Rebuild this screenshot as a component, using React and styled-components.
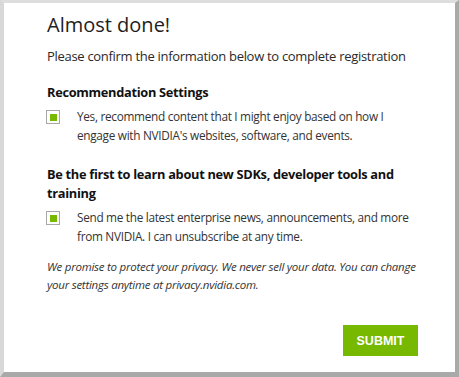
import React from 'react';
import styled, { createGlobalStyle } from 'styled-components';

const Global = createGlobalStyle`
  html, body { margin: 0; padding: 0; background: #fff; }
  * { box-sizing: border-box; }
`;

export default function App() {
  return (
    <>
      <Global />
      <Frame>
        <Title>Almost done!</Title>
        <Intro>Please confirm the information below to complete registration</Intro>

        <Section>
          <SectionTitle>Recommendation Settings</SectionTitle>
          <Option>
            <Check checked />
            <OptionText>
              Yes, recommend content that I might enjoy based on how I engage with NVIDIA's websites, software, and events.
            </OptionText>
          </Option>
        </Section>

        <Section second>
          <SectionTitle>Be the first to learn about new SDKs, developer tools and training</SectionTitle>
          <Option>
            <Check checked />
            <OptionText>
              Send me the latest enterprise news, announcements, and more from NVIDIA. I can unsubscribe at any time.
            </OptionText>
          </Option>
        </Section>

        <Privacy>
          We promise to protect your privacy. We never sell your data. You can change your settings anytime at privacy.nvidia.com.
        </Privacy>

        <Actions>
          <Submit>SUBMIT</Submit>
        </Actions>
      </Frame>
    </>
  );
}

const Frame = styled.div`
  width: 459px;
  height: 377px;
  background: #fff;
  border-style: solid;
  border-width: 3px 4px 5px 4px;
  border-color: #dedede #a9a9a9 #a9a9a9 #d8d8d8;
  padding: 8px 30px 0 43px;
  font-family: "Open Sans", "Noto Sans", sans-serif;
  color: #333;
`;

const Title = styled.h1`
  margin: 0;
  font-size: 20px;
  font-weight: 400;
  line-height: 28px;
  color: #1e1e1e;
`;

const Intro = styled.p`
  margin: 7px 0 0;
  font-size: 13px;
  letter-spacing: -0.3px;
  line-height: 20px;
  color: #2a2a2a;
`;

const Section = styled.div`
  margin-top: ${p => (p.second ? '21px' : '17px')};
`;

const SectionTitle = styled.h2`
  margin: 0;
  font-size: 12.8px;
  letter-spacing: -0.3px;
  font-weight: 700;
  line-height: 19px;
  color: #111;
`;

const Option = styled.label`
  display: flex;
  align-items: flex-start;
  gap: 17px;
  margin-top: 5px;
`;

const Check = styled.span`
  flex: none;
  width: 14px;
  height: 14px;
  margin: 3px 0 0 -1px;
  border: 1px solid #a8a8a8;
  background: #fff;
  display: flex;
  align-items: center;
  justify-content: center;
  &::after {
    content: '';
    width: 7px;
    height: 7px;
    background: ${p => (p.checked ? '#76b900' : 'transparent')};
  }
`;

const OptionText = styled.span`
  font-size: 11.8px;
  letter-spacing: -0.3px;
  line-height: 18.5px;
  color: #333;
  padding-right: 8px;
`;

const Privacy = styled.p`
  margin: 13px 0 0;
  font-size: 11.5px;
  letter-spacing: -0.25px;
  font-style: italic;
  line-height: 18px;
  color: #333;
`;

const Actions = styled.div`
  display: flex;
  justify-content: flex-end;
  margin-top: 31px;
  padding-right: 7px;
`;

const Submit = styled.button`
  width: 75px;
  height: 31px;
  border: none;
  background: #76b900;
  color: #fff;
  font-family: "Liberation Sans", Arial, sans-serif;
  font-weight: 700;
  font-size: 12.5px;
  padding: 0;
  cursor: pointer;
`;
